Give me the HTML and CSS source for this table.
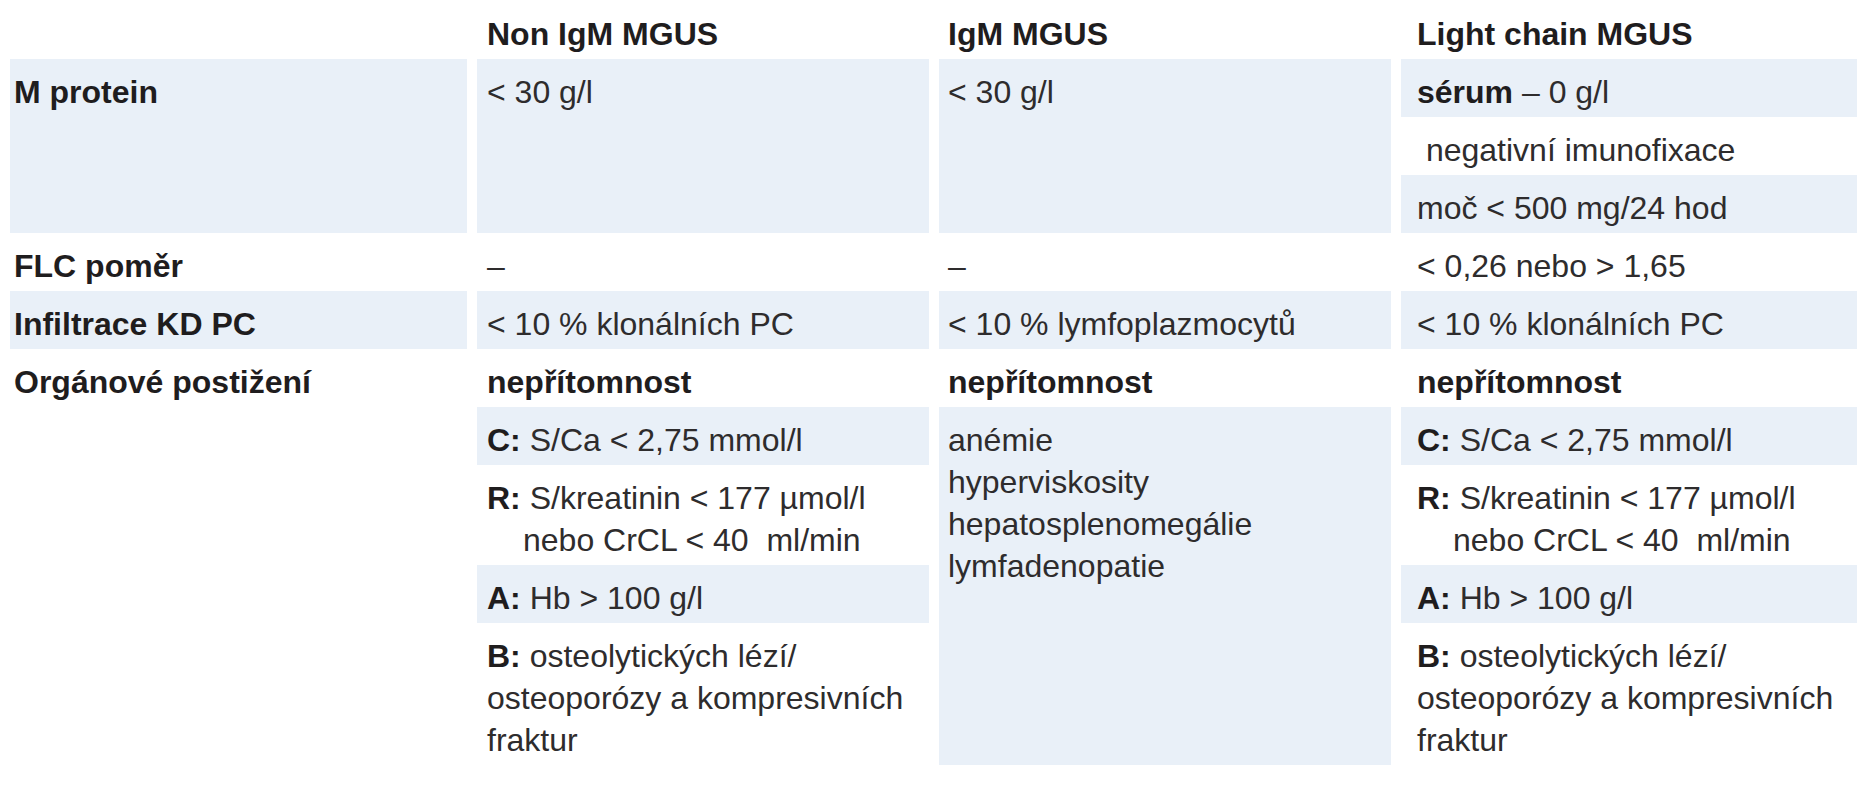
FILE: index.html
```html
<!DOCTYPE html>
<html lang="cs">
<head>
<meta charset="utf-8">
<title>MGUS</title>
<link rel="stylesheet" href="styles.css">
</head>
<body>
<div class="table">
  <div class="cell k hd"></div>
  <div class="cell a hd"><b>Non IgM MGUS</b></div>
  <div class="cell b hd"><b>IgM MGUS</b></div>
  <div class="cell c hd"><b>Light chain MGUS</b></div>

  <div class="cell k bg span3"><b>M protein</b></div>
  <div class="cell a bg span3">&lt; 30 g/l</div>
  <div class="cell b bg span3">&lt; 30 g/l</div>
  <div class="cell c bg"><b>sérum</b> – 0 g/l</div>
  <div class="cell c">&nbsp;negativní imunofixace</div>
  <div class="cell c bg">moč &lt; 500 mg/24 hod</div>

  <div class="cell k"><b>FLC poměr</b></div>
  <div class="cell a">–</div>
  <div class="cell b">–</div>
  <div class="cell c">&lt; 0,26 nebo &gt; 1,65</div>

  <div class="cell k bg"><b>Infiltrace KD PC</b></div>
  <div class="cell a bg">&lt; 10 % klonálních PC</div>
  <div class="cell b bg">&lt; 10 % lymfoplazmocytů</div>
  <div class="cell c bg">&lt; 10 % klonálních PC</div>

  <div class="cell k span5"><b>Orgánové postižení</b></div>
  <div class="cell a"><b>nepřítomnost</b></div>
  <div class="cell b"><b>nepřítomnost</b></div>
  <div class="cell c"><b>nepřítomnost</b></div>

  <div class="cell a bg"><b>C:</b> S/Ca &lt; 2,75 mmol/l</div>
  <div class="cell b bg span4">anémie<br>hyperviskosity<br>hepatosplenomegálie<br>lymfadenopatie</div>
  <div class="cell c bg"><b>C:</b> S/Ca &lt; 2,75 mmol/l</div>

  <div class="cell a"><b>R:</b> S/kreatinin &lt; 177 µmol/l<div class="indent">nebo CrCL &lt; 40&nbsp; ml/min</div></div>
  <div class="cell c"><b>R:</b> S/kreatinin &lt; 177 µmol/l<div class="indent">nebo CrCL &lt; 40&nbsp; ml/min</div></div>

  <div class="cell a bg"><b>A:</b> Hb &gt; 100 g/l</div>
  <div class="cell c bg"><b>A:</b> Hb &gt; 100 g/l</div>

  <div class="cell a"><b>B:</b> osteolytických lézí/<br>osteoporózy a kompresivních<br>fraktur</div>
  <div class="cell c"><b>B:</b> osteolytických lézí/<br>osteoporózy a kompresivních<br>fraktur</div>
</div>
</body>
</html>
```

FILE: styles.css
```css
html, body {
  margin: 0;
  background: #ffffff;
}

body {
  padding: 0 0 0 10px;
  font-family: "Liberation Sans", Arial, sans-serif;
  font-size: 32px;
  line-height: 42px;
  color: #2e2c2d;
}

b {
  font-weight: 700;
  color: #1f1d1e;
}

.table {
  display: grid;
  grid-template-columns: 457px 452px 452px 456px;
  column-gap: 10px;
}

.cell {
  padding: 12px 6px 4px 10px;
  white-space: nowrap;
}

.hd {
  padding-top: 13px;
  padding-bottom: 4px;
}

.k { padding-left: 4px; }
.a { padding-left: 10px; }
.b { padding-left: 9px; }
.c { padding-left: 16px; }

.bg {
  background: #e9f0f8;
}

.span3 { grid-row: span 3; }
.span4 { grid-row: span 4; }
.span5 { grid-row: span 5; }

.indent {
  padding-left: 36px;
}
```
